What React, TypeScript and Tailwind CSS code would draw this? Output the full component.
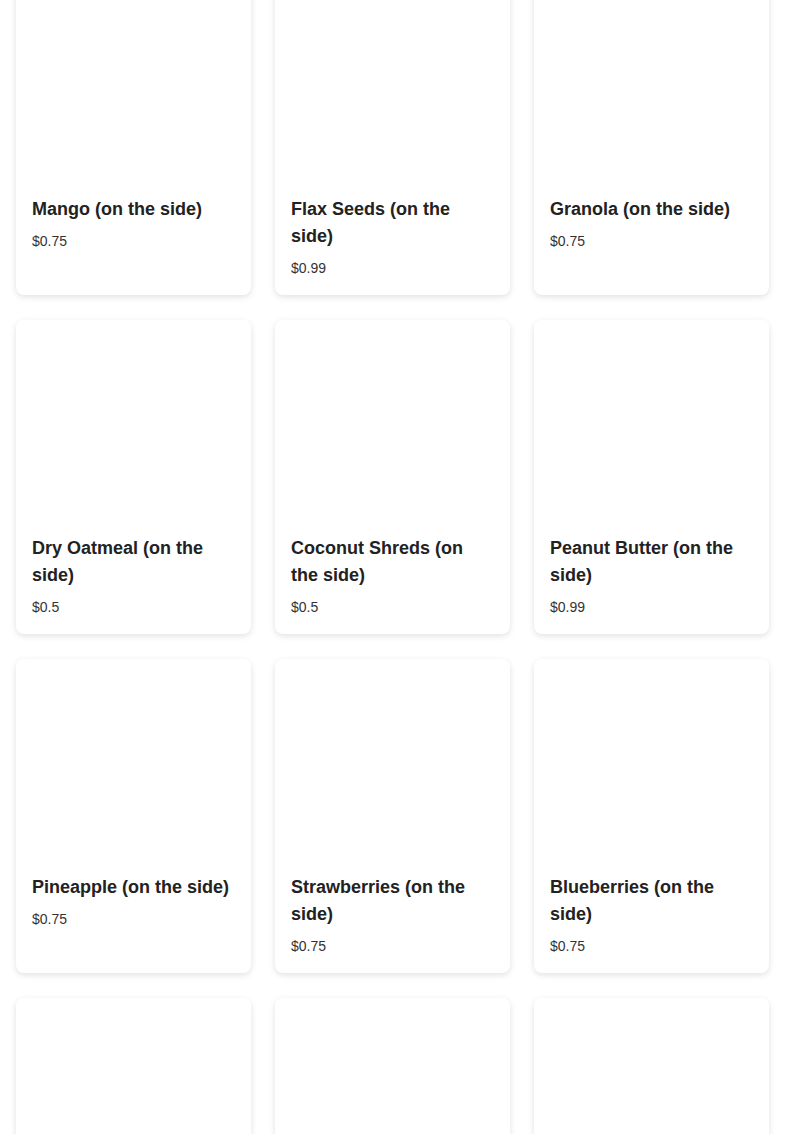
import React from "react";

const items = [
  { name: "Mango (on the side)", price: "$0.75" },
  { name: "Flax Seeds (on the side)", price: "$0.99" },
  { name: "Granola (on the side)", price: "$0.75" },
  { name: "Dry Oatmeal (on the side)", price: "$0.5" },
  { name: "Coconut Shreds (on the side)", price: "$0.5" },
  { name: "Peanut Butter (on the side)", price: "$0.99" },
  { name: "Pineapple (on the side)", price: "$0.75" },
  { name: "Strawberries (on the side)", price: "$0.75" },
  { name: "Blueberries (on the side)", price: "$0.75" },
  { name: "Banana (on the side)", price: "$0.75" },
  { name: "Chia Seeds (on the side)", price: "$0.99" },
  { name: "Honey (on the side)", price: "$0.75" },
];

export default function App() {
  return (
    <div className="bg-white min-h-screen" style={{ fontFamily: '"Liberation Sans", Arial, sans-serif' }}>
      <div className="grid grid-cols-3 gap-x-6 gap-y-[25px] px-4 -mt-[19px]">
        {items.map((it) => (
          <div key={it.name} className="bg-white rounded-lg shadow-[0_2px_6px_rgba(0,0,0,0.12)] flex flex-col">
            <div className="h-[200px] rounded-t-lg bg-white" />
            <div className="px-4 pt-[15px] pb-[17px]">
              <h3 className="text-[18px] leading-[27px] font-bold text-[#222] mb-2">{it.name}</h3>
              <p className="text-[14px] leading-[20px] text-[#333]">{it.price}</p>
            </div>
          </div>
        ))}
      </div>
    </div>
  );
}
